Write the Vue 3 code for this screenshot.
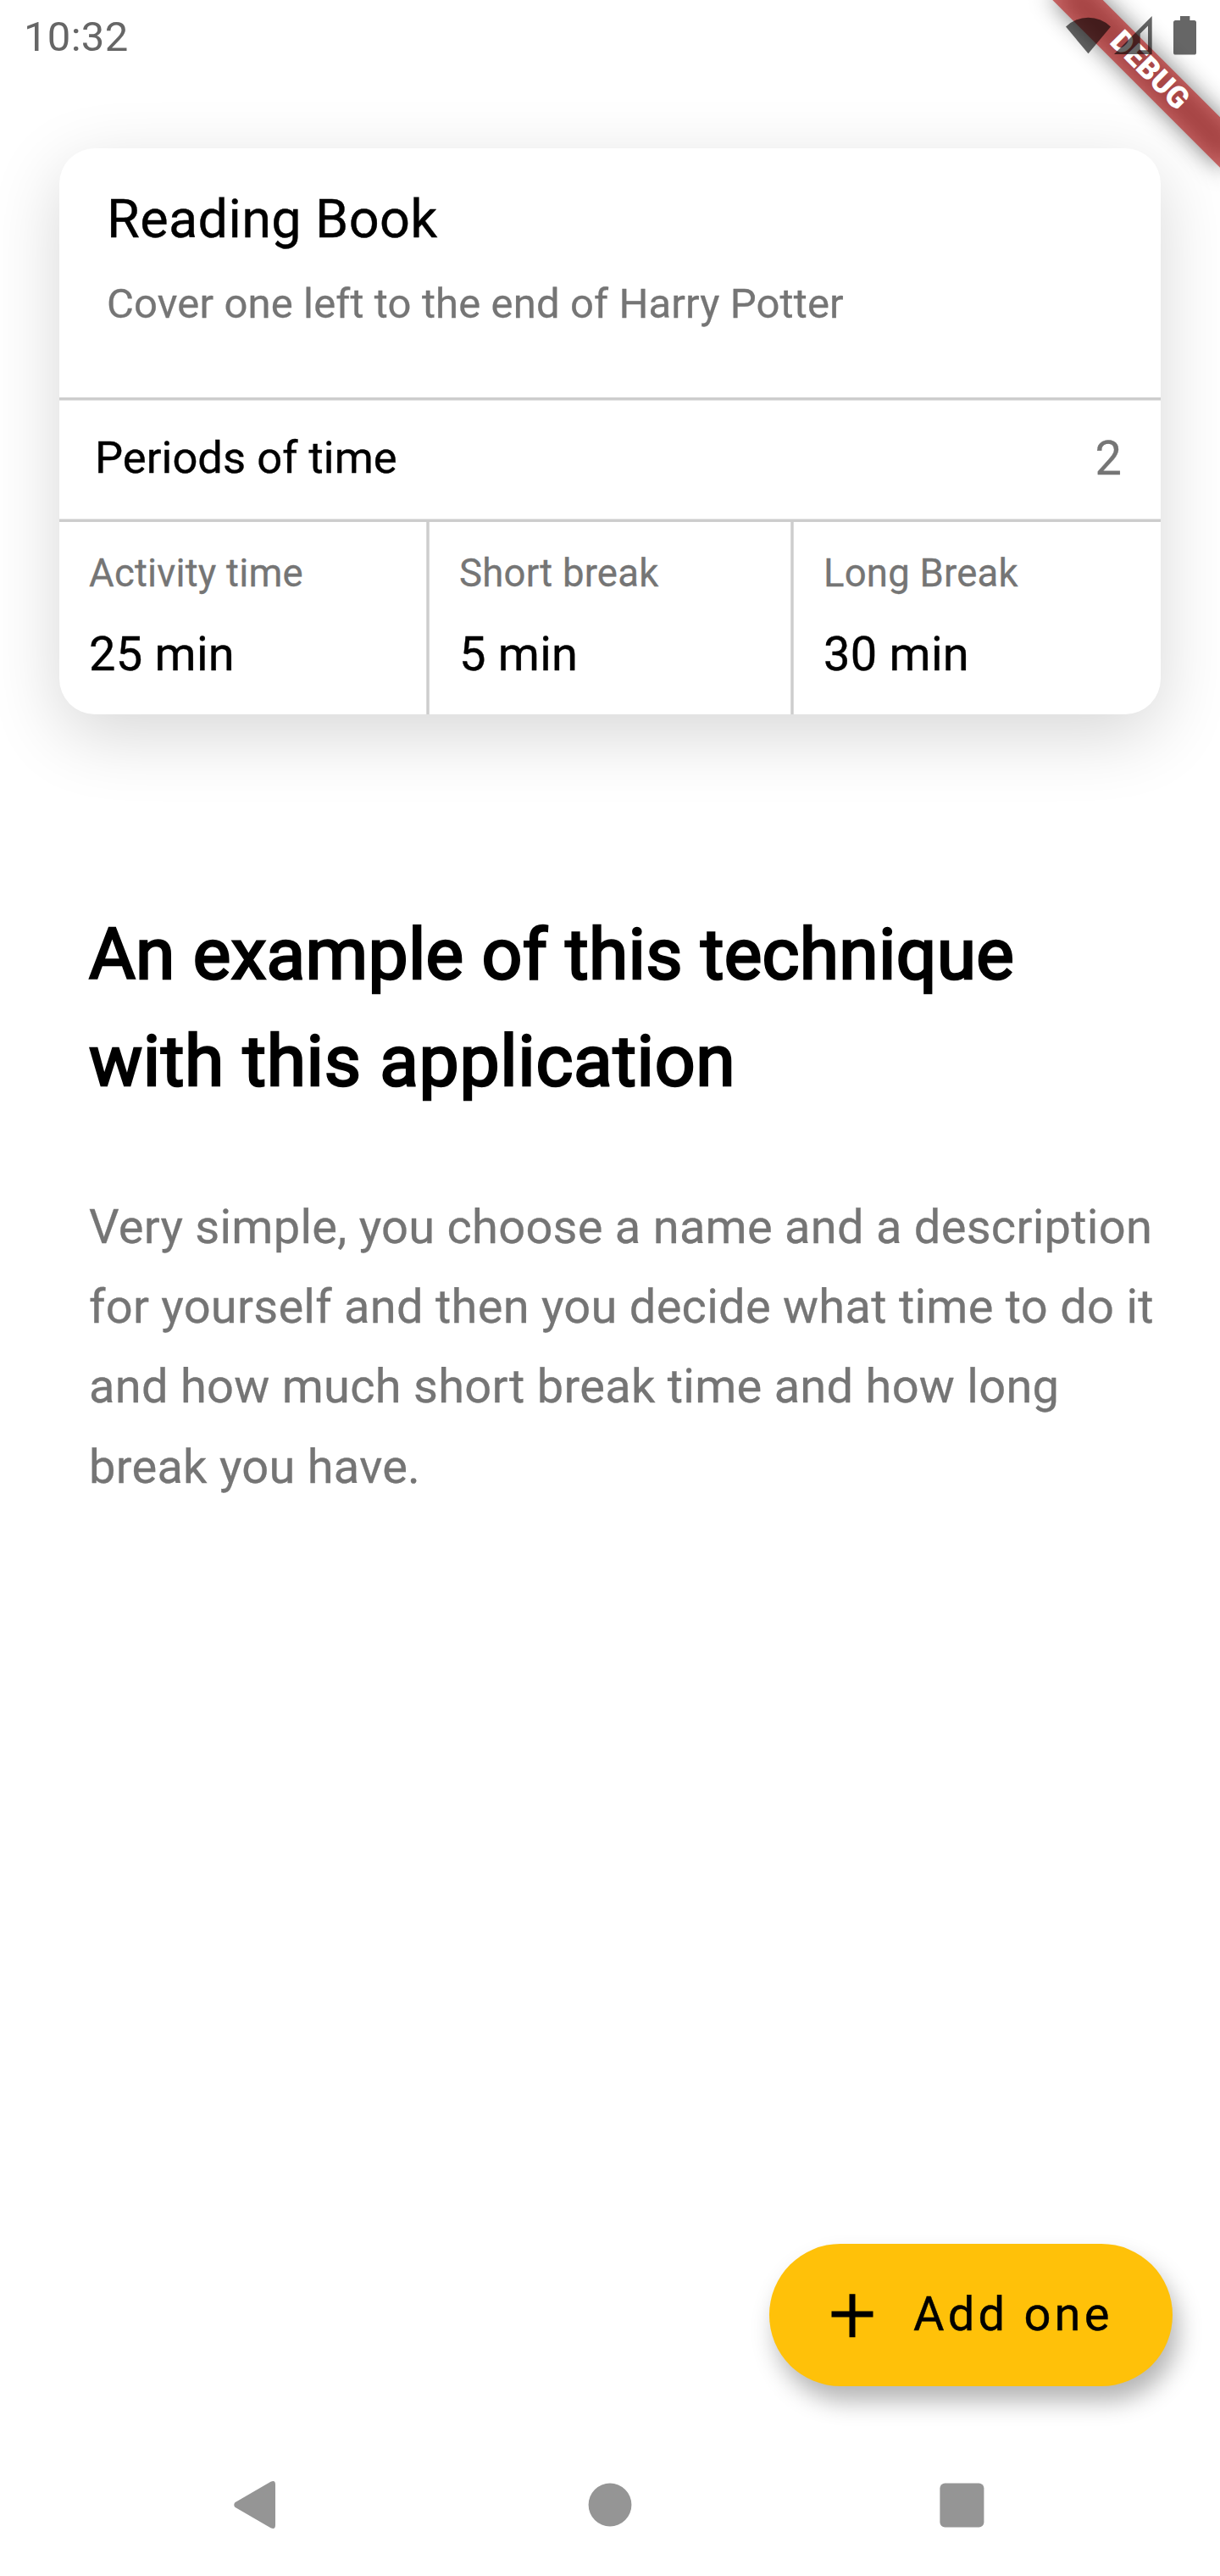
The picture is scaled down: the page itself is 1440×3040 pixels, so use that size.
<script setup>
const task = {
  title: 'Reading Book',
  description: 'Cover one left to the end of Harry Potter',
  periods: 2,
}

const times = [
  { label: 'Activity time', value: '25 min' },
  { label: 'Short break', value: '5 min' },
  { label: 'Long Break', value: '30 min' },
]
</script>

<template>
  <div class="screen">
    <div class="banner-corner">
      <div class="banner-shadow"></div>
      <div class="banner">DEBUG</div>
    </div>

    <header class="status">
      <span class="clock">10:32</span>
      <div class="status-icons">
        <svg class="wifi" width="54" height="46" viewBox="0 0 54 46">
          <path d="M0 12.5A38 38 0 0 1 53 12.5L26.5 44.3Z" />
        </svg>
        <svg class="signal" width="46" height="46" viewBox="0 0 46 46">
          <path fill-rule="evenodd" d="M0 45L44.7 0V45ZM30.7 20.8V40.2H40V11.5Z" />
        </svg>
        <svg class="battery" width="27" height="46" viewBox="0 0 27 46">
          <path d="M8 0H19.4V5H24.5Q27 5 27 7.5V43Q27 45.6 24.5 45.6H2.5Q0 45.6 0 43V7.5Q0 5 2.5 5H8Z" />
        </svg>
      </div>
    </header>

    <main class="content">
      <section class="card">
        <div class="card-head">
          <div class="title">{{ task.title }}</div>
          <div class="subtitle">{{ task.description }}</div>
        </div>
        <div class="rule rule-top"></div>
        <div class="periods">
          <span class="periods-label">Periods of time</span>
          <span class="periods-value">{{ task.periods }}</span>
        </div>
        <div class="rule rule-bottom"></div>
        <div class="times">
          <template v-for="(t, i) in times" :key="t.label">
            <div v-if="i > 0" class="vrule"></div>
            <div class="time">
              <div class="time-label">{{ t.label }}</div>
              <div class="time-value">{{ t.value }}</div>
            </div>
          </template>
        </div>
      </section>

      <h1 class="heading">
        An example of this technique<br /><span class="heading-second">with this application</span>
      </h1>

      <p class="body">
        Very simple, you choose a name and a description<br />
        for yourself and then you decide what time to do it<br />
        and how much short break time and how long<br />
        break you have.
      </p>
    </main>

    <button class="fab" type="button">
      <svg width="84" height="84" viewBox="0 0 24 24">
        <path d="M19 13h-6v6.8h-2V13H5v-2h6V5.2h2V11h6z" transform="translate(0 -.3)" />
      </svg>
      <span>Add one</span>
    </button>

    <nav class="navbar">
      <svg width="50" height="58" viewBox="0 0 50 58">
        <path d="M1.3 26.2Q-.8 29 1.3 31.8L43.5 56.3Q49 58.8 49 53V5Q49 -.8 43.5 1.7Z" />
      </svg>
      <svg class="home" width="52" height="52" viewBox="0 0 52 52"><circle cx="26" cy="26" r="25.4" /></svg>
      <svg width="53" height="53" viewBox="0 0 53 53"><rect x=".4" y=".4" width="52" height="52" rx="6" /></svg>
    </nav>
  </div>
</template>

<style>
body {
  margin: 0;
  background: #fff;
}
</style>

<style scoped>
.screen {
  position: relative;
  display: flex;
  flex-direction: column;
  width: 1440px;
  height: 3040px;
  overflow: hidden;
  box-sizing: border-box;
  background: #fff;
  color: #000;
  font-family: Roboto, 'Liberation Sans', sans-serif;
}

/* corner ribbon */
.banner-corner {
  position: absolute;
  top: 0;
  right: 0;
  z-index: 1;
  width: 280px;
  height: 280px;
  overflow: hidden;
}
.banner,
.banner-shadow {
  position: absolute;
  left: 55.9px;
  top: 63.1px;
  width: 280px;
  height: 42px;
  transform: rotate(45deg);
}
.banner-shadow {
  background: rgba(0, 0, 0, 0.5);
  filter: blur(14px);
}
.banner {
  background: rgba(183, 28, 28, 0.63);
  color: #fff;
  font-size: 35.7px;
  font-weight: 900;
  line-height: 39px;
  text-align: center;
}

/* status bar */
.status {
  position: relative;
  z-index: 2;
  display: flex;
  justify-content: space-between;
  align-items: flex-start;
  height: 84px;
  padding: 0 28px;
}
.clock {
  margin-top: 15px;
  color: #666;
  font-size: 49px;
  line-height: 58px;
  letter-spacing: 0.3px;
}
.status-icons {
  display: flex;
  margin-top: 19px;
  fill: rgba(0, 0, 0, 0.6);
}
.signal {
  margin: 0 24px 0 3.5px;
}

.content {
  flex: 1;
  padding: 91px 70px 0;
}

/* task card */
.card {
  height: 668px;
  border-radius: 42px;
  background: #fff;
  box-shadow: 0 24px 84px rgba(0, 0, 0, 0.16);
}
.card-head {
  box-sizing: border-box;
  height: 294px;
  padding: 46.5px 56px 0;
}
.title {
  font-size: 63px;
  line-height: 74px;
  letter-spacing: 0.36px;
  -webkit-text-stroke: 0.4px;
}
.subtitle {
  margin-top: 34px;
  color: #757575;
  font-size: 49px;
  line-height: 57px;
  letter-spacing: 0.13px;
  -webkit-text-stroke: 0.3px;
}
.rule {
  height: 4px;
}
.rule-top {
  background: linear-gradient(#cdcdcd 75%, #e6e6e6 75%);
}
.rule-bottom {
  background: linear-gradient(#e6e6e6 25%, #cdcdcd 25%);
}
.periods {
  display: flex;
  justify-content: space-between;
  box-sizing: border-box;
  height: 139px;
  padding: 35px 46px 0 42px;
}
.periods-label {
  margin-top: 1px;
  font-size: 52.5px;
  line-height: 62px;
  letter-spacing: 0.05px;
  -webkit-text-stroke: 0.4px;
}
.periods-value {
  color: #757575;
  font-size: 56px;
  line-height: 66px;
  -webkit-text-stroke: 0.3px;
}
.times {
  display: flex;
  height: 227px;
}
.vrule {
  width: 4px;
  background: linear-gradient(90deg, #dadada 25%, #cdcdcd 25% 75%, #dadada 75%);
}
.time {
  box-sizing: border-box;
  width: 433px;
  padding: 34px 35px 0;
}
.time:nth-child(3) {
  width: 426px;
}
.time-label {
  color: #757575;
  font-size: 45.5px;
  line-height: 54px;
  letter-spacing: 0.2px;
  -webkit-text-stroke: 0.3px;
}
.time-value {
  margin-top: 35px;
  font-size: 56px;
  line-height: 66px;
  letter-spacing: 0.25px;
  -webkit-text-stroke: 0.4px;
}

.heading {
  margin: 221px 0 0 35px;
  font-size: 84px;
  font-weight: 400;
  line-height: 126px;
  letter-spacing: 0.27px;
  white-space: nowrap;
  -webkit-text-stroke: 2.6px #000;
}
.heading-second {
  letter-spacing: 0.67px;
}
.body {
  margin: 84.5px 0 0 35px;
  color: #757575;
  font-size: 56px;
  line-height: 94.4px;
  letter-spacing: 0.26px;
  white-space: nowrap;
  -webkit-text-stroke: 0.3px;
}

/* floating action button */
.fab {
  display: flex;
  align-items: center;
  align-self: flex-end;
  box-sizing: border-box;
  width: 476px;
  height: 168px;
  margin: 0 56px 56px 0;
  padding: 0 0 0 56px;
  border: 0;
  border-radius: 84px;
  background: #ffc109;
  box-shadow: 7px 18px 28px rgba(0, 0, 0, 0.29);
  color: #000;
  font-family: inherit;
  font-size: 56px;
  line-height: 66px;
  letter-spacing: 4.2px;
}
.fab span {
  margin: -2px 0 0 30px;
  -webkit-text-stroke: 0.4px;
}

/* system navigation */
.navbar {
  display: flex;
  justify-content: space-between;
  align-items: center;
  box-sizing: border-box;
  height: 168px;
  padding: 0 278px 0 276px;
  fill: #959595;
}
.home {
  margin-left: 5px;
}
</style>
